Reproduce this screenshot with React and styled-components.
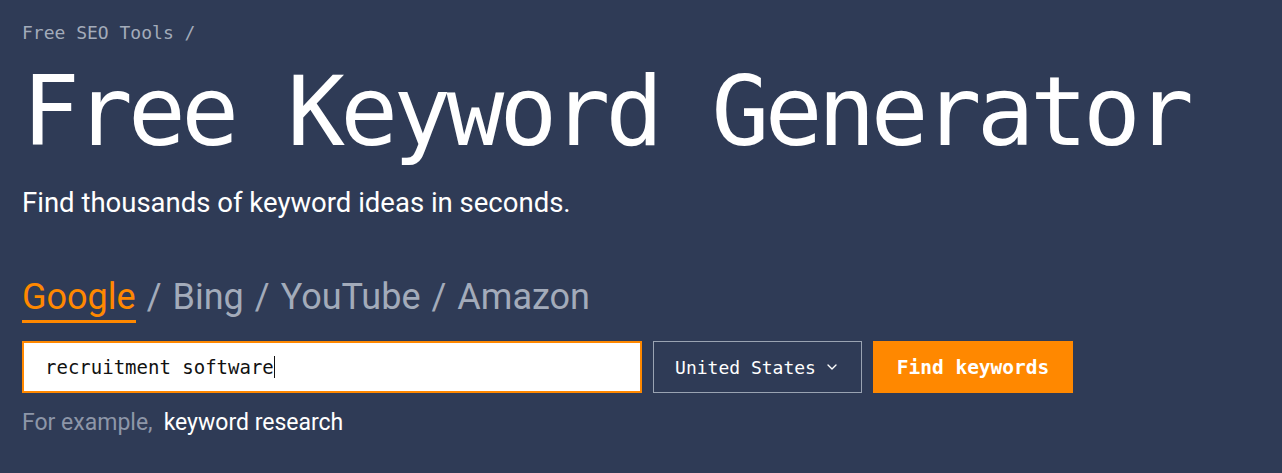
import React from "react";
import styled, { createGlobalStyle } from "styled-components";
import { FiChevronDown } from "react-icons/fi";

const GlobalStyle = createGlobalStyle`
  html, body {
    margin: 0;
    background: #2f3b56;
  }
  body {
    font-family: Roboto, "Noto Sans", sans-serif;
  }
`;

const mono = `"DejaVu Sans Mono", "Liberation Mono", monospace`;

const engines = ["Google", "Bing", "YouTube", "Amazon"];

export default function App() {
  return (
    <Page>
      <GlobalStyle />
      <Breadcrumb>Free SEO Tools /</Breadcrumb>
      <Title>Free Keyword Generator</Title>
      <Subtitle>Find thousands of keyword ideas in seconds.</Subtitle>
      <Tabs>
        {engines.map((name, i) => (
          <React.Fragment key={name}>
            {i > 0 && <Sep>/</Sep>}
            <Tab $active={i === 0}>{name}</Tab>
          </React.Fragment>
        ))}
      </Tabs>
      <SearchRow>
        <Input>
          recruitment software
          <Caret />
        </Input>
        <Select>
          United States
          <FiChevronDown />
        </Select>
        <Button>Find keywords</Button>
      </SearchRow>
      <Example>
        <span className="label">For example,</span>
        <span className="value">keyword research</span>
      </Example>
    </Page>
  );
}

// ===============================================================================================================================
//                                              STYLES
// ===============================================================================================================================

const Page = styled.div`
  min-height: 473px;
  box-sizing: border-box;
  padding: 20px 22px 0;
  background: #2f3b56;
`;

const Breadcrumb = styled.div`
  font-family: ${mono};
  font-size: 18px;
  line-height: 26px;
  color: #a3abba;
`;

const Title = styled.h1`
  margin: 11px 0 0;
  font-family: ${mono};
  font-weight: 400;
  font-size: 96px;
  line-height: 110px;
  letter-spacing: -4.75px;
  color: #fff;
`;

const Subtitle = styled.p`
  margin: 19px 0 0;
  font-size: 27.5px;
  line-height: 34px;
  color: #fff;
`;

const Tabs = styled.div`
  display: flex;
  align-items: baseline;
  gap: 11px;
  margin-top: 57px;
  font-size: 36px;
  line-height: 40px;
  color: #a3abba;
`;

const Sep = styled.span``;

const Tab = styled.span`
  padding-bottom: 3px;
  color: ${(p) => (p.$active ? "#ff8800" : "#a3abba")};
  border-bottom: 3px solid ${(p) => (p.$active ? "#ff8800" : "transparent")};
`;

const SearchRow = styled.div`
  display: flex;
  align-items: stretch;
  gap: 11px;
  margin-top: 18px;
  height: 52px;
`;

const Input = styled.div`
  width: 620px;
  box-sizing: border-box;
  display: flex;
  align-items: center;
  padding-left: 21px;
  background: #fff;
  border: 2px solid #ff8800;
  font-family: ${mono};
  font-size: 19px;
  color: #111;
`;

const Caret = styled.span`
  display: inline-block;
  width: 1px;
  height: 22px;
  background: #111;
`;

const Select = styled.div`
  width: 209px;
  box-sizing: border-box;
  display: flex;
  align-items: center;
  justify-content: center;
  gap: 8px;
  border: 1px solid #9aa3b2;
  font-family: ${mono};
  font-size: 18px;
  color: #fff;

  svg {
    font-size: 16px;
  }
`;

const Button = styled.div`
  width: 200px;
  display: flex;
  align-items: center;
  justify-content: center;
  background: #ff8800;
  font-family: ${mono};
  font-size: 19.5px;
  font-weight: 700;
  color: #fff;
`;

const Example = styled.div`
  display: flex;
  gap: 11px;
  margin-top: 17px;
  font-size: 23px;
  line-height: 26px;

  .label {
    color: #8d96a8;
  }
  .value {
    color: #fff;
  }
`;
